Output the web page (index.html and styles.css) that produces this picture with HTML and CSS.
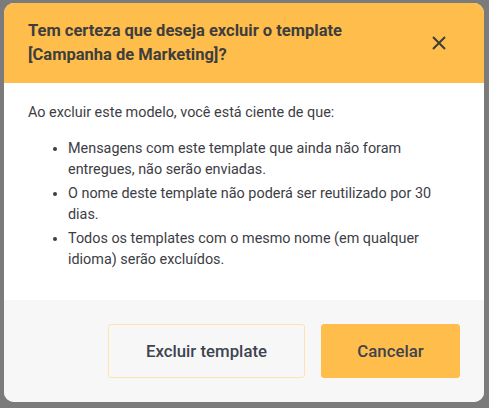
FILE: index.html
```html
<!DOCTYPE html>
<html lang="pt-BR">
<head>
<meta charset="utf-8">
<link rel="stylesheet" href="styles.css">
</head>
<body>
<div class="backdrop">
  <div class="modal">
    <div class="modal-header">
      <h2 class="modal-title">Tem certeza que deseja excluir o template [Campanha de Marketing]?</h2>
      <button class="close-btn" aria-label="Fechar">
        <svg width="14" height="14" viewBox="0 0 14 14"><path d="M1 1L13 13M13 1L1 13" stroke="#3d3d3d" stroke-width="2" fill="none"/></svg>
      </button>
    </div>
    <div class="modal-body">
      <p class="intro">Ao excluir este modelo, você está ciente de que:</p>
      <ul class="list">
        <li>Mensagens com este template que ainda não foram entregues, não serão enviadas.</li>
        <li>O nome deste template não poderá ser reutilizado por 30 dias.</li>
        <li>Todos os templates com o mesmo nome (em qualquer idioma) serão excluídos.</li>
      </ul>
    </div>
    <div class="modal-footer">
      <button class="btn btn-outline">Excluir template</button>
      <button class="btn btn-primary">Cancelar</button>
    </div>
  </div>
</div>
</body>
</html>
```

FILE: styles.css
```css
html, body {
  margin: 0;
  padding: 0;
  height: 100%;
}
body {
  background: #7b7b7b;
  font-family: Roboto, "Liberation Sans", sans-serif;
}
.backdrop {
  padding: 3px 5px 6px 4px;
  box-sizing: border-box;
  height: 408px;
}
.modal {
  background: #fff;
  border-radius: 10px;
  overflow: hidden;
  height: 399px;
  display: flex;
  flex-direction: column;
}
.modal-header {
  background: #ffbd4b;
  display: flex;
  align-items: center;
  justify-content: space-between;
  padding: 16px 38px 16px 24px;
  height: 80px;
  box-sizing: border-box;
}
.modal-title {
  margin: 0;
  font-size: 16.5px;
  font-weight: 700;
  line-height: 24px;
  color: #3e3e3e;
  max-width: 340px;
}
.close-btn {
  border: 0;
  background: transparent;
  padding: 0;
  width: 14px;
  height: 14px;
  display: flex;
  cursor: pointer;
}
.modal-body {
  flex: 1;
  padding: 20px 24px 0 24px;
  color: #3d3d45;
  font-size: 14.4px;
}
.intro {
  margin: 0 0 15px 0;
  line-height: 20px;
}
.list {
  margin: 0;
  padding-left: 40px;
  line-height: 21px;
}
.list li {
  margin-bottom: 3px;
}
.modal-footer {
  background: #f7f7f7;
  display: flex;
  justify-content: flex-end;
  gap: 16px;
  padding: 24px;
  height: 102px;
  box-sizing: border-box;
}
.btn {
  height: 54px;
  border-radius: 3px;
  font-family: Roboto, "Liberation Sans", sans-serif;
  font-size: 16.8px;
  font-weight: 500;
  color: #3d4450;
  padding: 0;
  cursor: pointer;
}
.btn-outline {
  background: #f7f7f7;
  border: 1px solid #ffe2b0;
  width: 197px;
}
.btn-primary {
  background: #ffbd4b;
  border: 1px solid #ffbd4b;
  width: 139px;
}
```
